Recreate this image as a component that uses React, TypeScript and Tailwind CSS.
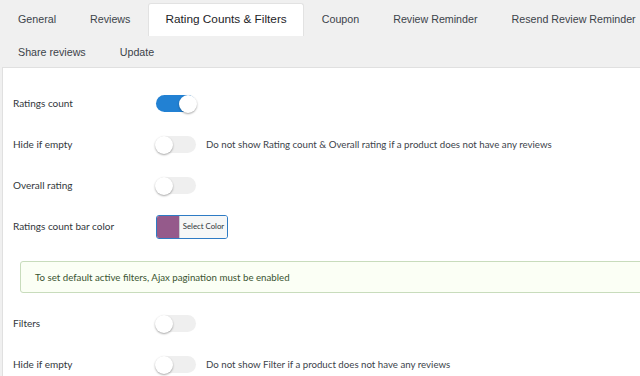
const tabsRow1 = ['General', 'Reviews', 'Rating Counts & Filters', 'Coupon', 'Review Reminder', 'Resend Review Reminder'];
const tabsRow2 = ['Share reviews', 'Update'];

const Toggle = ({ on = false }: { on?: boolean }) => (
  <div
    className={`relative w-[40px] h-[17px] rounded-full ${on ? 'bg-[#2281d3]' : 'bg-[#efefef]'}`}
  >
    <div
      className={`absolute top-[-0.5px] w-[18px] h-[18px] rounded-full bg-white shadow-[0_1px_2px_rgba(0,0,0,0.35)] ${on ? 'right-[-1px]' : 'left-[-1px]'}`}
    />
  </div>
);

const Row = ({ label, children, desc }: any) => (
  <div className="flex items-center h-[41px]">
    <div className="w-[143px] text-[10px] text-[#32373c]">{label}</div>
    <div className="w-[50px]">{children}</div>
    {desc && <div className="text-[9.7px] text-[#3c434a]">{desc}</div>}
  </div>
);

const Tab = ({ name, active }: any) => (
  <div
    className={`h-[33px] px-4 mr-[2px] flex items-center whitespace-nowrap ${
      active
        ? 'bg-white border border-b-0 border-[#e2e2e2] rounded-t-[3px] text-[#1d2327] text-[11.8px]'
        : 'text-[#3c434a] text-[10.7px]'
    }`}
  >
    {name}
  </div>
);

export default function App() {
  return (
    <div
      className="w-[640px] h-[376px] overflow-hidden bg-[#f0f0f0]"
      style={{ fontFamily: '"Liberation Sans", Arial, sans-serif' }}
    >
      {/* tabs */}
      <div className="pl-[2px] pt-[3px]">
        <div className="flex h-[33px]">
          {tabsRow1.map((t) => (
            <Tab key={t} name={t} active={t === 'Rating Counts & Filters'} />
          ))}
        </div>
        <div className="flex h-[31px]">
          {tabsRow2.map((t) => (
            <Tab key={t} name={t} />
          ))}
        </div>
      </div>

      {/* panel */}
      <div
        className="ml-[2px] h-[309px] bg-white border-l border-t border-[#e0e0e0] pl-[10px] pt-[15px] overflow-hidden"
        style={{ fontFamily: 'Lato, "Open Sans", sans-serif' }}
      >
        <Row label="Ratings count">
          <Toggle on />
        </Row>
        <Row
          label="Hide if empty"
          desc="Do not show Rating count & Overall rating if a product does not have any reviews"
        >
          <Toggle />
        </Row>
        <Row label="Overall rating">
          <Toggle />
        </Row>
        <Row label="Ratings count bar color">
          <div className="flex w-[72px] h-[24px] border border-[#2e7bc4] rounded-[3px] overflow-hidden">
            <div className="w-[22px] bg-[#955a8b]" />
            <div className="flex-1 bg-[#f6f7f7] border-l border-[#c9cdd1] flex items-center justify-center text-[7.8px] text-[#2c3338]">
              Select Color
            </div>
          </div>
        </Row>

        <div className="ml-[7px] mt-[14px] mb-[10px] w-[700px] h-[32px] border border-[#c8dcbc] rounded-[3px] bg-[#fbfff5] flex items-center pl-[14px] text-[9.7px] text-[#3a5430]">
          To set default active filters, Ajax pagination must be enabled
        </div>

        <Row label="Filters">
          <Toggle />
        </Row>
        <Row label="Hide if empty" desc="Do not show Filter if a product does not have any reviews">
          <Toggle />
        </Row>
      </div>
    </div>
  );
}
